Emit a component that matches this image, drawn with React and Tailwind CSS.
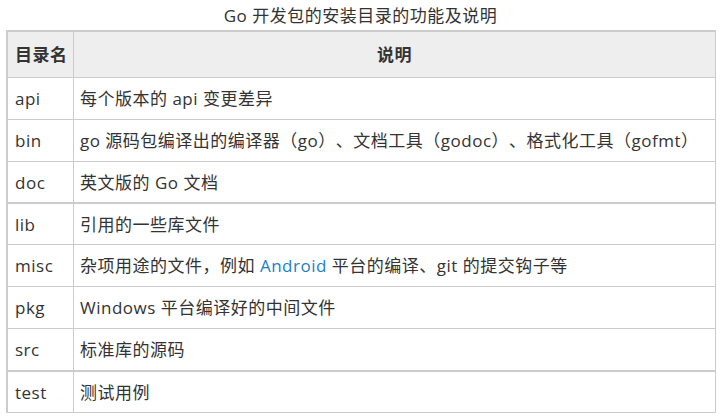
export default function App() {
  const rows = [
    { k: "api", v: "每个版本的 api 变更差异", h: "h-[42px]", b: "border-b" },
    { k: "bin", v: "go 源码包编译出的编译器（go）、文档工具（godoc）、格式化工具（gofmt）", h: "h-[42px]", b: "border-b" },
    { k: "doc", v: "英文版的 Go 文档", h: "h-[42px]", b: "border-b-2" },
    { k: "lib", v: "引用的一些库文件", h: "h-[41px]", b: "border-b" },
    { k: "misc", v: <>杂项用途的文件，例如 <span className="text-[#1a7fc7]">Android</span> 平台的编译、git 的提交钩子等</>, h: "h-[42px]", b: "border-b" },
    { k: "pkg", v: "Windows 平台编译好的中间文件", h: "h-[42px]", b: "border-b" },
    { k: "src", v: "标准库的源码", h: "h-[43px]", b: "border-b-2" },
    { k: "test", v: "测试用例", h: "h-[41px]", b: "border-b" },
  ];
  return (
    <div
      className="w-[721px] h-[418px] bg-white text-[#333] text-[17px] tracking-[0.5px] [text-spacing-trim:space-all]"
      style={{ fontFamily: '"Open Sans", "Noto Sans CJK SC", sans-serif' }}
    >
      <div className="h-[30px] pt-[7px] text-center text-[17px] leading-[17px]">
        Go 开发包的安装目录的功能及说明
      </div>
      <div className="ml-[6px] w-[710px] border-l-2 border-t-2 border-r border-[#ccc]">
        <div className="flex h-[46px] bg-[#eee] border-b border-[#ccc] font-bold">
          <div className="w-[66px] border-r border-[#ccc] flex items-center pl-[7px] leading-none"><span>目录名</span></div>
          <div className="flex-1 flex items-center justify-center leading-none"><span>说明</span></div>
        </div>
        {rows.map((r) => (
          <div key={r.k} className={`flex ${r.h} ${r.b} border-[#ccc]`}>
            <div className="w-[66px] border-r border-[#ccc] flex items-center pl-[7px] leading-none"><span>{r.k}</span></div>
            <div className="flex-1 flex items-center pl-[6px] leading-none whitespace-nowrap"><span>{r.v}</span></div>
          </div>
        ))}
      </div>
    </div>
  );
}
